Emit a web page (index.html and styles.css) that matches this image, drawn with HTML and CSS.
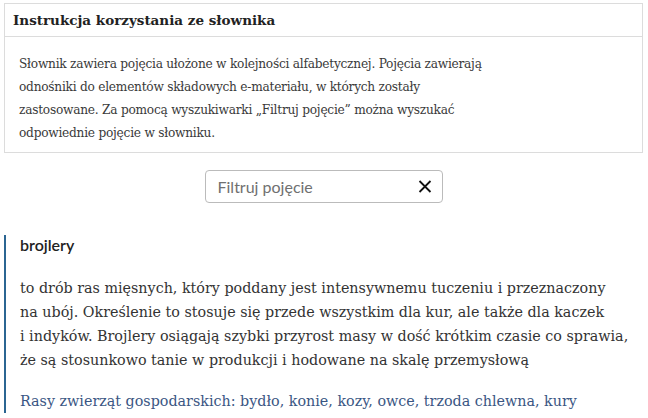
FILE: index.html
```html
<!DOCTYPE html>
<html lang="pl">
<head>
    <meta charset="UTF-8">
    <meta name="viewport" content="width=device-width, initial-scale=1.0">
    <title>Słownik pojęć</title>
    <link rel="stylesheet" href="styles.css">
</head>
<body>
    <div class="instructions">
        <div class="instructions-title">Instrukcja korzystania ze słownika</div>
        <p class="instructions-text">Słownik zawiera pojęcia ułożone w kolejności alfabetycznej. Pojęcia zawierają odnośniki do elementów składowych e-materiału, w których zostały zastosowane. Za pomocą wyszukiwarki „Filtruj pojęcie” można wyszukać odpowiednie pojęcie w słowniku.</p>
    </div>

    <div class="search">
        <div class="search-box">
            <input type="text" class="search-input" placeholder="Filtruj pojęcie">
            <button class="search-clear" aria-label="Wyczyść">
                <svg width="14" height="13" viewBox="0 0 14 13">
                    <path d="M1.5 1 L12.5 12 M12.5 1 L1.5 12" stroke="#111" stroke-width="1.8" fill="none"/>
                </svg>
            </button>
        </div>
    </div>

    <div class="term">
        <div class="term-name">brojlery</div>
        <p class="term-def">to drób ras mięsnych, który poddany jest intensywnemu tuczeniu i przeznaczony na&nbsp;ubój. Określenie to stosuje się przede wszystkim dla kur, ale także dla kaczek i&nbsp;indyków. Brojlery osiągają szybki przyrost masy w dość krótkim czasie co sprawia, że są stosunkowo tanie w produkcji i hodowane na skalę przemysłową</p>
        <a class="term-link" href="#">Rasy zwierząt gospodarskich: bydło, konie, kozy, owce, trzoda chlewna, kury</a>
    </div>
</body>
</html>
```

FILE: styles.css
```css
body {
    margin: 0;
    padding: 3px 5px 0 4px;
    font-family: "DejaVu Serif", serif;
    color: #333;
    background: #fff;
}
.instructions {
    border: 1px solid #dcdcdc;
}
.instructions-title {
    padding: 7px 8px 7px 8px;
    border-bottom: 1px solid #dcdcdc;
    font-weight: bold;
    font-size: 13.5px;
    line-height: 18px;
    color: #222;
}
.instructions-text {
    margin: 0;
    padding: 16px 14px 7px 14px;
    max-width: 470px;
    font-size: 12.2px;
    letter-spacing: -0.25px;
    line-height: 23px;
    color: #3a3a3a;
}
.search {
    display: flex;
    justify-content: center;
    padding: 17px 0 32px 0;
}
.search-box {
    box-sizing: border-box;
    display: flex;
    align-items: center;
    width: 238px;
    height: 33px;
    border: 1px solid #bbb;
    border-radius: 4px;
}
.search-input {
    flex: 1;
    min-width: 0;
    border: none;
    outline: none;
    padding: 0 0 0 12px;
    font-family: Lato, sans-serif;
    font-size: 16px;
    color: #333;
    background: transparent;
}
.search-input::placeholder {
    color: #707070;
}
.search-clear {
    border: none;
    background: none;
    padding: 0 10px 0 4px;
    display: flex;
    align-items: center;
}
.term {
    border-left: 2px solid #2b6592;
    padding: 0 4px 0 14px;
}
.term-name {
    font-family: Lato, sans-serif;
    font-weight: 600;
    font-size: 16px;
    line-height: 19px;
    color: #222;
}
.term-def {
    margin: 22px 0 0 0;
    font-size: 14.3px;
    line-height: 24px;
    color: #333;
}
.term-link {
    display: block;
    margin-top: 17px;
    font-size: 14.3px;
    line-height: 24px;
    color: #3a5683;
    text-decoration: none;
}
```
